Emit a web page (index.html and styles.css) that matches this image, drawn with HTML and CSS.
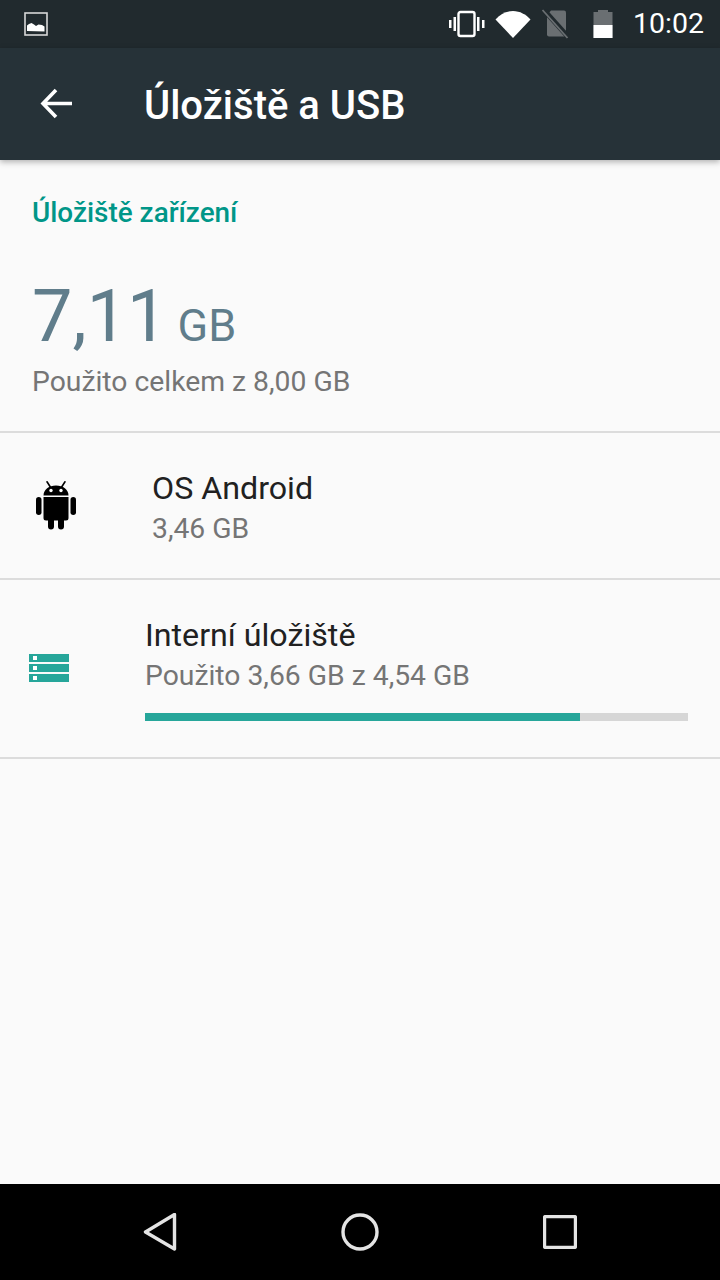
FILE: index.html
```html
<!DOCTYPE html>
<html lang="cs">
<head>
<meta charset="utf-8">
<title>Úložiště a USB</title>
<link rel="stylesheet" href="styles.css">
</head>
<body>
<div class="screen">
  <header class="status">
    <svg class="st-pic" width="24" height="24" viewBox="0 0 24 24"><rect x="1" y="1" width="22" height="22" fill="none" stroke="#d8d8d8" stroke-width="1.6"/><path d="M3 19v-5.500l2-1.500 2.500-1 2.500 1.500 2 1.500 2.500-1.500 3.500 0.500 2.500 1.500v5z" fill="#fff"/></svg>
    <div class="status-right">
      <svg class="st-vib" width="38" height="28" viewBox="0 0 38 28"><rect x="10.500" y="2" width="16" height="24" rx="2" fill="none" stroke="#fff" stroke-width="2.400"/><path d="M5.500 7H8v14H5.500zM29 7h2.500v14H29zM1 10h2.500v8H1zM34 10h2.500v8H34z" fill="#fff"/></svg>
      <svg class="st-wifi" width="36" height="28" viewBox="0 0 36 28"><path d="M0.500 9.500C5 4.500 11 1 18 1s13 3.500 17.500 8.500L18 28z" fill="#fff"/></svg>
      <svg class="st-sim" width="28" height="30" viewBox="0 0 28 30"><path d="M9 1.500h13a2 2 0 0 1 2 2v22a2 2 0 0 1-2 2H7a2 2 0 0 1-2-2V6z" fill="#6a6f72"/><path d="M2 1l25 28" stroke="#212a2e" stroke-width="5"/><path d="M0.500 1l25 28" stroke="#6a6f72" stroke-width="1.800"/></svg>
      <svg class="st-bat" width="20" height="30" viewBox="0 0 20 30"><path d="M5 1h10v2h4.500v26H.5V3H5z" fill="#6a6f72"/><path d="M.5 16h19v13H.5z" fill="#fff"/></svg>
      <span class="clock">10:02</span>
    </div>
  </header>
  <div class="appbar">
    <svg class="back" width="36" height="36" viewBox="0 0 36 36"><path d="M33 17.500H4M17 4 4 17.500 17 31" fill="none" stroke="#fff" stroke-width="3.600"/></svg>
    <h1 class="title">Úložiště a USB</h1>
  </div>
  <main class="content">
    <section class="summary">
      <h2 class="section-title">Úložiště zařízení</h2>
      <div class="total"><span class="total-num">7,11</span><span class="total-unit">GB</span></div>
      <div class="sub">Použito celkem z 8,00 GB</div>
    </section>
    <div class="row row-android">
      <svg class="android" width="42" height="50" viewBox="0 0 42 50"><path d="M12 .8l3.500 5.500M30 .8l-3.500 5.500" stroke="#000" stroke-width="1.600" stroke-linecap="round"/><path d="M8.500 14.500C8.500 8.500 14 4.500 21 4.500s12.500 4 12.500 10z" fill="#000"/><circle cx="16" cy="9.500" r="1.700" fill="#fff"/><circle cx="26" cy="9.500" r="1.700" fill="#fff"/><path d="M8.500 16h25v21a2.500 2.500 0 0 1-2.500 2.500h-2v6a3 3 0 0 1-6 0v-6h-4v6a3 3 0 0 1-6 0v-6h-2A2.500 2.500 0 0 1 8.500 37z" fill="#000"/><rect x="1" y="16" width="5.500" height="18" rx="2.750" fill="#000"/><rect x="35.500" y="16" width="5.500" height="18" rx="2.750" fill="#000"/></svg>
      <div class="row-text">
        <div class="row-title">OS Android</div>
        <div class="row-sub">3,46 GB</div>
      </div>
    </div>
    <div class="row row-internal">
      <svg class="storage" width="40" height="28" viewBox="0 0 40 28"><path d="M0 0h40v8H0zM0 10h40v8H0zM0 20h40v8H0z" fill="#26a69a"/><path d="M4 2h4v4H4zM4 12h4v4H4zM4 22h4v4H4z" fill="#fff"/></svg>
      <div class="row-text grow">
        <div class="row-title">Interní úložiště</div>
        <div class="row-sub">Použito 3,66 GB z 4,54 GB</div>
        <div class="bar"><div class="bar-fill" style="width:80.100%"></div></div>
      </div>
    </div>
  </main>
  <nav class="navbar">
    <svg width="34" height="38" viewBox="0 0 34 38"><path d="M31.500 1.500 2.500 19 31.500 36z" fill="none" stroke="#e4e4e4" stroke-width="3.400" stroke-linejoin="round"/></svg>
    <svg width="38" height="38" viewBox="0 0 38 38"><circle cx="19" cy="19" r="17" fill="none" stroke="#e4e4e4" stroke-width="3.400"/></svg>
    <svg width="34" height="34" viewBox="0 0 34 34"><rect x="1.500" y="1.500" width="31" height="31" rx="1.500" fill="none" stroke="#e4e4e4" stroke-width="3.400"/></svg>
  </nav>
</div>
</body>
</html>
```
FILE: styles.css
```css
* { box-sizing: border-box; }
html, body { margin: 0; padding: 0; }
body { font-family: Roboto, "Noto Sans", sans-serif; background: #fafafa; }
.screen { width: 720px; height: 1280px; display: flex; flex-direction: column; overflow: hidden; }
.status { height: 48px; flex: none; background: #212a2e; display: flex; align-items: center; justify-content: space-between; padding: 0 16px 0 24px; }
.status-right { display: flex; align-items: center; }
.st-vib { margin-right: 9px; }
.st-wifi { margin-right: 11px; }
.st-sim { margin-right: 23px; }
.st-bat { margin-right: 20px; }
.clock { color: #fff; font-size: 28.5px; line-height: 48px; }
.appbar { height: 112px; flex: none; background: #263238; display: flex; align-items: center; padding-left: 39px; box-shadow: 0 2px 6px rgba(0,0,0,.3); position: relative; z-index: 1; }
.title { margin: 4px 0 0 69px; color: #fff; font-size: 40px; font-weight: 500; line-height: 48px; }
.content { flex: 1; background: #fafafa; }
.summary { height: 273px; padding: 37px 32px 0; border-bottom: 2px solid #dcdcdc; }
.section-title { margin: 0; color: #009688; font-size: 27.9px; font-weight: 500; line-height: 32px; }
.total { margin-top: 43px; color: #607d8b; line-height: 90px; height: 90px; display: flex; align-items: baseline; }
.total-num { font-size: 72px; }
.total-unit { font-size: 45px; margin-left: 10px; }
.sub { color: #757575; font-size: 28.3px; line-height: 36px; margin-top: 2px; }
.row { display: flex; border-bottom: 2px solid #dcdcdc; }
.row-android { height: 147px; padding: 35px 0 0 35px; }
.android { margin-top: 13px; margin-right: 75px; }
.row-internal { height: 179px; padding: 35px 32px 0 29px; }
.storage { margin-top: 39px; margin-right: 76px; }
.grow { flex: 1; }
.row-title { color: #212121; font-size: 32.2px; line-height: 40px; }
.row-sub { color: #757575; font-size: 28.3px; line-height: 42px; }
.bar { height: 8px; margin-top: 16px; background: #d6d6d6; }
.bar-fill { height: 100%; background: #26a69a; }
.navbar { height: 96px; flex: none; background: #000; display: flex; align-items: center; justify-content: space-between; padding: 0 143px 0 143px; }
```
